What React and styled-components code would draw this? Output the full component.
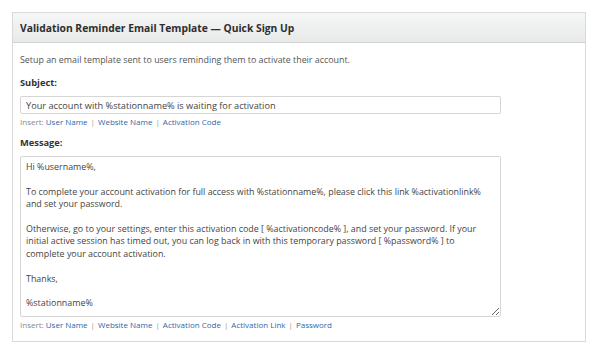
import React from 'react'
import styled, { createGlobalStyle } from 'styled-components'

const GlobalStyle = createGlobalStyle`
    body {
        margin: 0;
        background: #fff;
        font-family: "Open Sans", "Liberation Sans", sans-serif;
        color: #444;
    }
`

const MESSAGE = `Hi %username%,

To complete your account activation for full access with %stationname%, please click this link %activationlink% and set your password.

Otherwise, go to your settings, enter this activation code [ %activationcode% ], and set your password. If your initial active session has timed out, you can log back in with this temporary password [ %password% ] to complete your account activation.

Thanks,

%stationname%`

function InsertLinks({ links }) {
    return (
        <InsertRow>
            <span>Insert: </span>
            {links.map((l, i) => (
                <React.Fragment key={l}>
                    {i > 0 && <Sep>|</Sep>}
                    <InsertLink href="#">{l}</InsertLink>
                </React.Fragment>
            ))}
        </InsertRow>
    )
}

export default function App() {
    return (
        <Page>
            <GlobalStyle />
            <Panel>
                <PanelHeader>Validation Reminder Email Template — Quick Sign Up</PanelHeader>
                <PanelBody>
                    <Desc>Setup an email template sent to users reminding them to activate their account.</Desc>
                    <Field>
                        <Label>Subject:</Label>
                        <TextInput type="text" defaultValue="Your account with %stationname% is waiting for activation" />
                        <InsertLinks links={['User Name', 'Website Name', 'Activation Code']} />
                    </Field>
                    <Field>
                        <Label>Message:</Label>
                        <TextArea defaultValue={MESSAGE} />
                        <InsertLinks links={['User Name', 'Website Name', 'Activation Code', 'Activation Link', 'Password']} />
                    </Field>
                </PanelBody>
            </Panel>
        </Page>
    )
}

const Page = styled.div`
    padding: 12px 13px 13px 12px;
`
const Panel = styled.div`
    width: 574px;
    border: solid 1px #d9d9d9;
    background-color: #fff;
    box-sizing: border-box;
`
const PanelHeader = styled.div`
    height: 29px;
    display: flex;
    align-items: center;
    padding-left: 7px;
    font-size: 10.3px;
    font-weight: bold;
    color: #2e2e2e;
    background: linear-gradient(#f5f6f6, #e8e9e9);
    border-bottom: solid 1px #d2d2d2;
`
const PanelBody = styled.div`
    padding: 10px 7px 11px 7px;
`
const Desc = styled.div`
    font-size: 8.9px;
    color: #555;
    line-height: 14px;
`
const Field = styled.div`
    margin-top: 9px;
`
const Label = styled.div`
    font-size: 9.3px;
    font-weight: bold;
    color: #333;
    line-height: 14px;
    margin-bottom: 6px;
`
const TextInput = styled.input`
    display: block;
    width: 481px;
    height: 18px;
    box-sizing: border-box;
    border: solid 1px #d6d6d6;
    border-radius: 2px;
    padding: 0 5px;
    font-family: inherit;
    font-size: 9.2px;
    color: #444;
    outline: none;
`
const TextArea = styled.textarea`
    display: block;
    width: 481px;
    height: 161px;
    box-sizing: border-box;
    border: solid 1px #d6d6d6;
    border-radius: 2px;
    padding: 4px 5px;
    font-family: inherit;
    font-size: 8.9px;
    line-height: 12.4px;
    color: #444;
    outline: none;
    resize: vertical;
`
const InsertRow = styled.div`
    margin-top: 2px;
    font-size: 8px;
    line-height: 11px;
    color: #888;
`
const Sep = styled.span`
    margin: 0 3px;
    color: #999;
`
const InsertLink = styled.a`
    color: #3366a8;
    text-decoration: none;
`
